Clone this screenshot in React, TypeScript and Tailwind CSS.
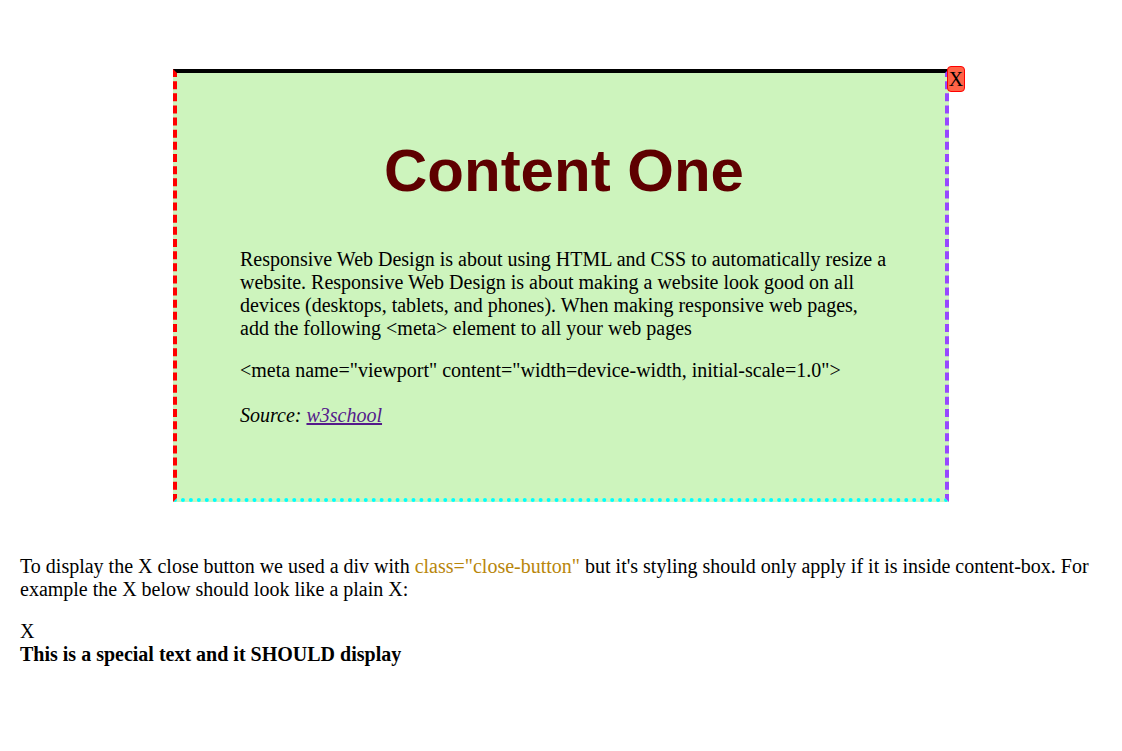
import React from 'react';

const serif = "font-['Liberation_Serif','Times_New_Roman',serif]";

const ContentBox: React.FC = () => {
  return (
    <div
      className="relative mx-auto mt-[68px] h-[433px] w-[776px] bg-[#cdf4bd] border-4
        border-t-black border-l-[#ff0000] border-r-[#9747ff] border-b-[#00ffff]
        [border-top-style:solid] [border-left-style:dashed] [border-right-style:dashed] [border-bottom-style:dotted]"
    >
      <div
        className={`absolute right-[-20px] top-[-7px] flex h-[26px] w-[18px] items-center justify-center
          rounded-[4px] border border-[#ff0000] bg-[#ff6347] text-[20px] leading-[23px] text-black ${serif}`}
      >
        X
      </div>

      <h1 className="pl-[6px] pt-[63px] text-center font-['Liberation_Sans',Arial,sans-serif] text-[60px] font-bold leading-[69px] text-[#5e0000]">
        Content One
      </h1>

      <div className={`ml-[63px] mt-[43px] w-[648px] text-[20px] leading-[23px] text-black ${serif}`}>
        <p>
          Responsive Web Design is about using HTML and CSS to automatically resize a website.
          Responsive Web Design is about making a website look good on all devices (desktops,
          tablets, and phones). When making responsive web pages, add the following &lt;meta&gt;
          element to all your web pages
        </p>
        <p className="mt-[19px]">
          &lt;meta name="viewport" content="width=device-width, initial-scale=1.0"&gt;
        </p>
        <p className="mt-[22px] italic">
          Source: <a href="#" className="text-[#551a8b] underline">w3school</a>
        </p>
      </div>
    </div>
  );
};

const App: React.FC = () => {
  return (
    <div className={`min-h-[751px] bg-white pt-px text-black ${serif}`}>
      <ContentBox />

      <div className="mt-[53px] px-[20px] text-[20px] leading-[23px]">
        <p>
          To display the X close button we used a div with{' '}
          <span className="text-[#b8860b]">class="close-button"</span> but it's styling should
          only apply if it is inside content-box. For example the X below should look like a
          plain X:
        </p>
        <div className="mt-[19px]">X</div>
        <div className="font-bold">This is a special text and it SHOULD display</div>
      </div>
    </div>
  );
};

export default App;
